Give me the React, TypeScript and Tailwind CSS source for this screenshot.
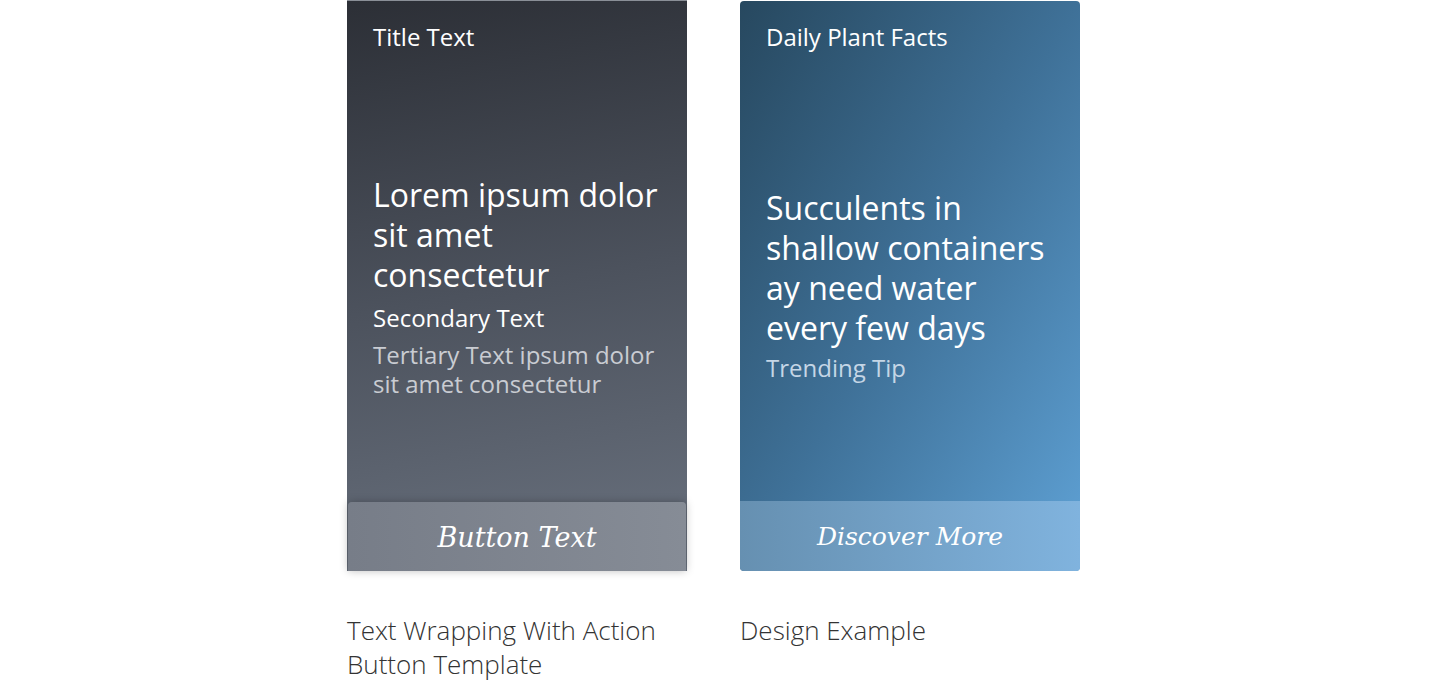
import React from 'react';

const sans = { fontFamily: '"Open Sans", "Noto Sans", sans-serif' };
const serif = { fontFamily: '"DejaVu Serif", "Liberation Serif", serif' };

type CardProps = {
  title: string;
  primary: string;
  secondary?: string;
  tertiary: string;
  button: string;
  variant: 'gray' | 'blue';
  caption: string;
};

function Card({ title, primary, secondary, tertiary, button, variant, caption }: CardProps) {
  const isGray = variant === 'gray';
  return (
    <div className="flex flex-col w-[340px]">
      <div
        className={
          isGray
            ? 'relative flex flex-col h-[571px] bg-[linear-gradient(170deg,#2c2f36_0%,#4c525d_50%,#6a727f_100%)] border-t border-[#8a8f97]'
            : 'relative flex flex-col h-[570px] mt-[1px] rounded-[4px] overflow-hidden bg-gradient-to-br from-[#27485f] via-[#3f7198] to-[#5fa2d6]'
        }
        style={sans}
      >
        <div className="px-[26px] pt-[21px] text-[24px] leading-[30px] text-white">{title}</div>
        <div className="flex-1 flex flex-col justify-center px-[26px] pt-[18px]">
          <div className="text-[32px] leading-[40px] text-white">{primary}</div>
          {secondary && (
            <div className="mt-[8px] text-[24px] leading-[30px] text-white">{secondary}</div>
          )}
          <div
            className={
              isGray
                ? 'mt-[7px] text-[24px] leading-[29px] text-[#c9ccd2]'
                : 'mt-[5px] text-[24px] leading-[30px] text-[#c5d6e6]'
            }
          >
            {tertiary}
          </div>
        </div>
        <div
          className={
            isGray
              ? 'h-[69px] mx-[1px] pt-[3px] flex items-center justify-center rounded-t-[4px] bg-gradient-to-r from-[#777d88] to-[#868c96] shadow-[0_0_8px_rgba(0,0,0,0.25)]'
              : 'h-[70px] pt-[2px] flex items-center justify-center bg-gradient-to-r from-[#6690b1] to-[#80b3de]'
          }
        >
          <span className={isGray ? 'italic text-[27px] text-white' : 'italic text-[25px] text-white'} style={serif}>
            {button}
          </span>
        </div>
      </div>
      <div className="mt-[42px] text-[26px] leading-[34px] font-light text-[#333333]" style={sans}>
        {caption}
      </div>
    </div>
  );
}

export default function App() {
  return (
    <div className="w-[1440px] h-[681px] bg-white overflow-hidden">
      <div className="flex gap-[53px] pl-[347px]">
        <Card
          variant="gray"
          title="Title Text"
          primary="Lorem ipsum dolor sit amet consectetur"
          secondary="Secondary Text"
          tertiary="Tertiary Text ipsum dolor sit amet consectetur"
          button="Button Text"
          caption="Text Wrapping With Action Button Template"
        />
        <Card
          variant="blue"
          title="Daily Plant Facts"
          primary="Succulents in shallow containers ay need water every few days"
          tertiary="Trending Tip"
          button="Discover More"
          caption="Design Example"
        />
      </div>
    </div>
  );
}
